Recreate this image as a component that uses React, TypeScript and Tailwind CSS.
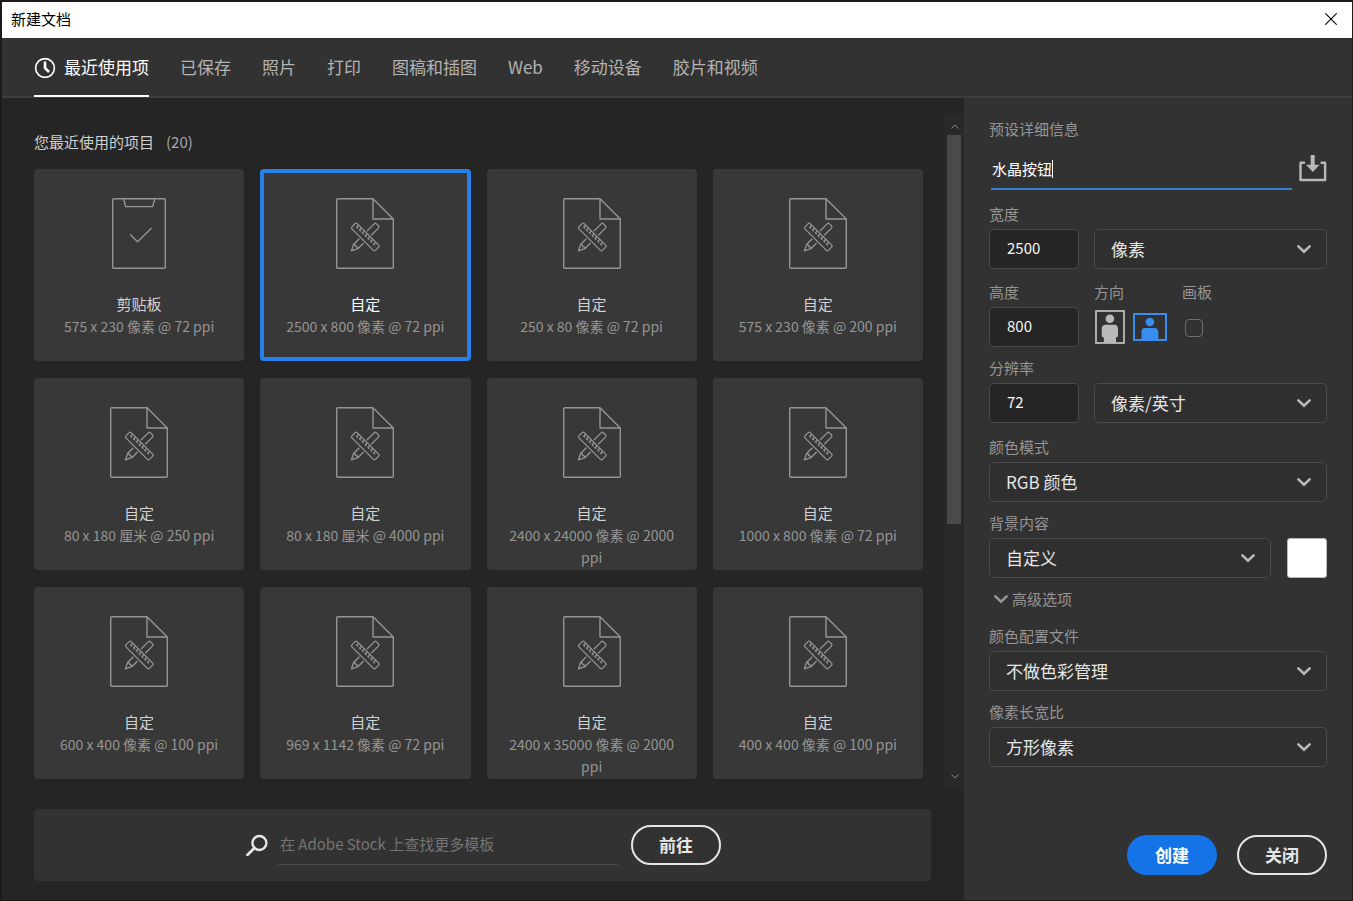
import { useState } from 'react';
import type { ReactNode } from 'react';

const tabs = ['最近使用项', '已保存', '照片', '打印', '图稿和插图', 'Web', '移动设备', '胶片和视频'];

const presets = [
  { name: '剪贴板', meta: '575 x 230 像素 @ 72 ppi', clipboard: true },
  { name: '自定', meta: '2500 x 800 像素 @ 72 ppi' },
  { name: '自定', meta: '250 x 80 像素 @ 72 ppi' },
  { name: '自定', meta: '575 x 230 像素 @ 200 ppi' },
  { name: '自定', meta: '80 x 180 厘米 @ 250 ppi' },
  { name: '自定', meta: '80 x 180 厘米 @ 4000 ppi' },
  { name: '自定', meta: '2400 x 24000 像素 @ 2000 ppi' },
  { name: '自定', meta: '1000 x 800 像素 @ 72 ppi' },
  { name: '自定', meta: '600 x 400 像素 @ 100 ppi' },
  { name: '自定', meta: '969 x 1142 像素 @ 72 ppi' },
  { name: '自定', meta: '2400 x 35000 像素 @ 2000 ppi' },
  { name: '自定', meta: '400 x 400 像素 @ 100 ppi' },
];

const rulerTicks = [-13, -9, -5, -1, 3, 7, 11];

function ClockIcon() {
  return (
    <svg width="22" height="22" viewBox="0 0 22 22" fill="none" stroke="currentColor" aria-hidden="true">
      <circle cx="11" cy="12" r="9.4" strokeWidth="1.6" />
      <path d="M11 5.5V12l4 4" strokeWidth="2.6" />
    </svg>
  );
}

function ClipboardIcon() {
  return (
    <svg width="54" height="71" viewBox="0 0 54 71" fill="none" stroke="currentColor" strokeWidth="1.4" aria-hidden="true">
      <rect x="0.7" y="0.7" width="52.6" height="69.6" rx="1" />
      <path d="M11.7 1l2 7.6h27l2-7.6" strokeLinejoin="round" />
      <path d="M18.2 36.5l7.3 7.2L39.6 30" />
    </svg>
  );
}

function DocumentIcon() {
  return (
    <svg width="58" height="71" viewBox="0 0 58 71" fill="none" stroke="currentColor" strokeWidth="1.4" aria-hidden="true">
      <path
        d="M37 .7H1.7a1 1 0 0 0-1 1v67.6a1 1 0 0 0 1 1h54.6a1 1 0 0 0 1-1V21L37 .7V21h20.3"
        strokeLinejoin="round"
      />
      <g transform="translate(29.3 39) rotate(45)" strokeWidth="1.3">
        <rect x="-16.6" y="-3.7" width="33.2" height="7.4" rx="1.4" />
        {rulerTicks.map((x) => (
          <path key={x} d={`M${x} -3.7v2.8h1.8`} />
        ))}
      </g>
      <g transform="translate(29.3 39) rotate(-45)" strokeWidth="1.3" strokeLinejoin="round">
        <path d="M5.4 -3H15.6q1.6 0 1.6 1.6V1.4q0 1.6 -1.6 1.6H5.4" />
        <path d="M-5.4 -3H-13.6L-19.6 0L-13.6 3H-5.4M-13.6 -3q1.6 1.6 0 3q1.6 1.4 0 3" />
      </g>
    </svg>
  );
}

function Chevron({ className = '' }: { className?: string }) {
  return (
    <svg
      width="14"
      height="9"
      viewBox="0 0 14 9"
      fill="none"
      stroke="currentColor"
      strokeWidth="2.6"
      className={className}
      aria-hidden="true"
    >
      <path d="M1.4 1.4L7 6.8l5.6-5.4" strokeLinecap="round" />
    </svg>
  );
}

function ScrollArrow({ up = false }: { up?: boolean }) {
  return (
    <svg width="8" height="5" viewBox="0 0 8 5" fill="none" stroke="currentColor" aria-hidden="true">
      <path d={up ? 'M.5 4.5L4 1l3.5 3.5' : 'M.5 .5L4 4 7.5 .5'} />
    </svg>
  );
}

function Field({ label, id, className = '', children }: { label: string; id: string; className?: string; children: ReactNode }) {
  return (
    <div className={`flex flex-col gap-1 ${className}`}>
      <label htmlFor={id} className="text-[15px] leading-[22px] text-[#959595]">
        {label}
      </label>
      {children}
    </div>
  );
}

function NumberBox({ id, value }: { id: string; value: string }) {
  return (
    <input
      id={id}
      type="text"
      defaultValue={value}
      className="h-10 w-full rounded-[5px] border border-[#4a4a4a] bg-[#252525] px-[17px] pb-[3px] text-[15px] text-[#f5f5f5] outline-none"
    />
  );
}

function Dropdown({ id, value, label, className = '' }: { id: string; value: string; label?: string; className?: string }) {
  return (
    <div className={`relative ${className}`}>
      <select
        id={id}
        aria-label={label}
        className="block h-10 w-full appearance-none rounded-[5px] border border-[#4a4a4a] bg-[#2f2f2f] pr-10 pl-4 text-[17px] text-[#e6e6e6] outline-none"
      >
        <option>{value}</option>
      </select>
      <Chevron className="pointer-events-none absolute top-4 right-4 text-[#b9b9b9]" />
    </div>
  );
}

function Nav() {
  const [active, setActive] = useState('最近使用项');

  return (
    <nav className="flex gap-[31px] border-b-2 border-[#3e3e3e] bg-[#323232] px-8">
      {tabs.map((tab, i) => (
        <button
          key={tab}
          type="button"
          onClick={() => setActive(tab)}
          className={`-mb-px flex h-[59px] items-center gap-2 border-b-2 text-[17px] whitespace-nowrap ${
            tab === active ? 'border-white text-white' : 'border-transparent text-[#b3b3b3]'
          }`}
        >
          {i === 0 && <ClockIcon />}
          {tab}
        </button>
      ))}
    </nav>
  );
}

function PresetGrid() {
  const [selected, setSelected] = useState(1);

  return (
    <div className="flex flex-1">
      <div className="flex-1 pt-8 pr-[21px] pb-2.5 pl-8">
        <h2 className="flex gap-3 text-[15px] leading-6 text-[#d0d0d0]">
          您最近使用的项目 <span className="text-[#a8a8a8]">(20)</span>
        </h2>
        <div className="mt-[15px] grid grid-cols-4 gap-x-4 gap-y-[17px]">
          {presets.map((preset, i) => (
            <button
              key={preset.meta}
              type="button"
              onClick={() => setSelected(i)}
              className={`flex min-h-48 flex-col items-center justify-start rounded bg-[#383838] px-4 pt-[29px] leading-[22px] text-[#959595] ${
                i === selected ? 'ring-4 ring-[#2680eb] ring-inset' : ''
              }`}
            >
              {preset.clipboard ? <ClipboardIcon /> : <DocumentIcon />}
              <span className={`mt-6 text-[15px] ${i === selected ? 'text-white' : 'text-[#d2d2d2]'}`}>{preset.name}</span>
              <span className="text-[14px]">{preset.meta}</span>
            </button>
          ))}
        </div>
      </div>
      <div className="mt-4 flex w-5 flex-col bg-[#292929] pr-[3px] pl-[3px] text-[#8a8a8a]">
        <button type="button" aria-label="向上滚动" className="flex h-[21px] items-center justify-center pt-1 pl-0.5">
          <ScrollArrow up />
        </button>
        <div className="flex-1">
          <div className="h-[61%] min-h-[389px] bg-[#4a4a4a]" />
        </div>
        <button type="button" aria-label="向下滚动" className="flex h-[25px] items-center justify-center pl-0.5">
          <ScrollArrow />
        </button>
      </div>
    </div>
  );
}

function StockSearch() {
  return (
    <form
      onSubmit={(e) => e.preventDefault()}
      className="mt-5 mr-[33px] mb-[19px] ml-8 flex h-[72px] items-center justify-center rounded bg-[#323232] pl-0.5"
    >
      <svg width="22" height="22" viewBox="0 0 22 22" fill="none" stroke="#e6e6e6" strokeWidth="2.4" aria-hidden="true">
        <circle cx="13.4" cy="9" r="7" />
        <path d="M8.4 14l-7 7" strokeWidth="2.6" strokeLinecap="round" />
      </svg>
      <input
        type="text"
        aria-label="在 Adobe Stock 上查找更多模板"
        placeholder="在 Adobe Stock 上查找更多模板"
        className="ml-2.5 h-10 w-[340px] border-b border-[#4a4a4a] px-0.5 pb-0.5 text-[15px] text-[#e6e6e6] outline-none placeholder:text-[#747474]"
      />
      <button
        type="submit"
        className="ml-[13px] h-10 w-[90px] rounded-full border-2 border-[#e6e6e6] text-[17px] font-bold text-[#e6e6e6]"
      >
        前往
      </button>
    </form>
  );
}

function DetailsPanel() {
  const [landscape, setLandscape] = useState(true);

  return (
    <aside className="flex w-[388px] shrink-0 flex-col bg-[#323232] px-[25px] pt-5 pb-[25px]">
      <label htmlFor="doc-name" className="text-[15px] leading-[22px] text-[#959595]">
        预设详细信息
      </label>
      <div className="mt-2 flex h-[42px] items-center">
        <div className="relative ml-0.5 h-full flex-1 border-b-2 border-[#347fd3]">
          <input
            id="doc-name"
            type="text"
            defaultValue="水晶按钮"
            className="h-full w-full px-px text-[15px] text-white outline-none"
          />
          <span className="absolute top-3 left-[61px] h-[18px] w-px bg-white" />
        </div>
        <button type="button" aria-label="保存预设" className="ml-[7px]">
          <svg width="28" height="29" viewBox="0 0 28 29" fill="none" stroke="#b9b9b9" strokeWidth="2.4" aria-hidden="true">
            <path d="M6 7.7H1.5V25h24.6V7.7h-4.5" strokeLinejoin="round" />
            <path d="M13.7 0v11" strokeWidth="4" />
            <path d="M7 9.8h13.6L13.8 17z" fill="#b9b9b9" stroke="none" />
          </svg>
        </button>
      </div>

      <div className="mt-[13px] flex items-end gap-[15px]">
        <Field label="宽度" id="width" className="w-[90px]">
          <NumberBox id="width" value="2500" />
        </Field>
        <Dropdown id="width-unit" label="单位" value="像素" className="flex-1" />
      </div>

      <div className="mt-3 flex gap-[15px]">
        <Field label="高度" id="height" className="w-[90px]">
          <NumberBox id="height" value="800" />
        </Field>
        <div className="flex flex-col gap-1">
          <span className="text-[15px] leading-[22px] text-[#959595]">方向</span>
          <div className="flex h-10 items-center gap-2 pl-px">
            <button
              type="button"
              aria-label="纵向"
              aria-pressed={!landscape}
              onClick={() => setLandscape(false)}
              className={landscape ? 'text-[#b9b9b9]' : 'text-[#378ef0]'}
            >
              <svg width="30" height="34" viewBox="0 0 30 34" aria-hidden="true">
                <rect x="1" y="1" width="28" height="32" fill="none" stroke="currentColor" strokeWidth="1.8" />
                <circle cx="14.9" cy="8.7" r="4.3" fill="currentColor" />
                <path
                  d="M10.5 14.8h8.8c2.3 0 3.7 1.5 3.7 3.8V26c0 .9-1.2 1.2-2 1.2V33H8.8v-5.8c-.8 0-2-.3-2-1.2v-7.4c0-2.3 1.4-3.8 3.7-3.8z"
                  fill="currentColor"
                />
              </svg>
            </button>
            <button
              type="button"
              aria-label="横向"
              aria-pressed={landscape}
              onClick={() => setLandscape(true)}
              className={landscape ? 'text-[#378ef0]' : 'text-[#b9b9b9]'}
            >
              <svg width="34" height="28" viewBox="0 0 34 28" aria-hidden="true">
                <rect x="1" y="1" width="32" height="26" fill="none" stroke="currentColor" strokeWidth="2" />
                <circle cx="16.9" cy="9" r="4.3" fill="currentColor" />
                <path d="M12 15h9.8c2.3 0 3.5 1.5 3.5 3.7V27H8.5v-8.3c0-2.2 1.2-3.7 3.5-3.7z" fill="currentColor" />
              </svg>
            </button>
          </div>
        </div>
        <Field label="画板" id="artboard">
          <div className="flex h-10 items-center pt-0.5 pl-[3px]">
            <input
              id="artboard"
              type="checkbox"
              className="size-[18px] appearance-none rounded border border-[#6e6e6e] checked:bg-[#378ef0]"
            />
          </div>
        </Field>
      </div>

      <div className="mt-2.5 flex items-end gap-[15px]">
        <Field label="分辨率" id="resolution" className="w-[90px]">
          <NumberBox id="resolution" value="72" />
        </Field>
        <Dropdown id="resolution-unit" label="分辨率单位" value="像素/英寸" className="flex-1" />
      </div>

      <Field label="颜色模式" id="color-mode" className="mt-[13px]">
        <Dropdown id="color-mode" value="RGB 颜色" />
      </Field>

      <Field label="背景内容" id="background" className="mt-2.5">
        <div className="flex gap-4">
          <Dropdown id="background" value="自定义" className="flex-1" />
          <button type="button" aria-label="背景颜色" className="size-10 rounded-[3px] border border-[#b9b9b9] bg-white" />
        </div>
      </Field>

      <button type="button" className="mt-2.5 flex items-center gap-1 self-start pl-[5px] text-[15px] leading-[22px] text-[#959595]">
        <Chevron />
        高级选项
      </button>

      <Field label="颜色配置文件" id="profile" className="mt-[15px]">
        <Dropdown id="profile" value="不做色彩管理" />
      </Field>

      <Field label="像素长宽比" id="aspect" className="mt-2.5">
        <Dropdown id="aspect" value="方形像素" />
      </Field>

      <div className="mt-auto flex justify-end gap-5">
        <button type="button" className="h-10 w-[90px] rounded-full bg-[#1473e6] text-[17px] font-bold text-white">
          创建
        </button>
        <button
          type="button"
          className="h-10 w-[90px] rounded-full border-2 border-[#e6e6e6] text-[17px] font-bold text-[#e6e6e6]"
        >
          关闭
        </button>
      </div>
    </aside>
  );
}

export default function App() {
  return (
    <div className="flex min-h-screen flex-col border-t-2 border-r border-b border-l-2 border-[#1b1b1b] bg-[#252525] font-['Noto_Sans_CJK_SC',sans-serif]">
      <header className="flex h-9 items-center justify-between bg-white pr-[15px] pb-0.5 pl-[9px] text-black">
        <h1 className="text-[15px]">新建文档</h1>
        <button type="button" aria-label="关闭窗口">
          <svg width="12" height="12" viewBox="0 0 12 12" fill="none" stroke="currentColor" strokeWidth="1.1" aria-hidden="true">
            <path d="M.3 .3l11.4 11.4M11.7 .3L.3 11.7" />
          </svg>
        </button>
      </header>
      <Nav />
      <main className="flex flex-1">
        <div className="flex flex-1 flex-col">
          <PresetGrid />
          <StockSearch />
        </div>
        <DetailsPanel />
      </main>
    </div>
  );
}
